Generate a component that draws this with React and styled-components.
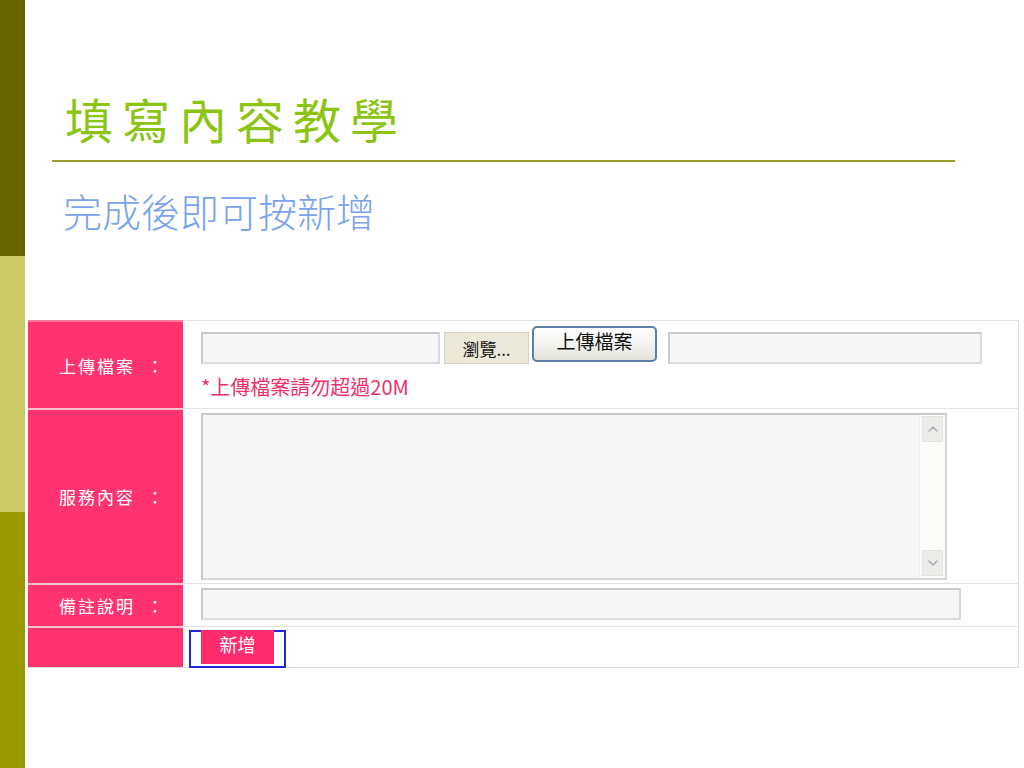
import React from "react";
import styled, { createGlobalStyle } from "styled-components";
import { ChevronUp, ChevronDown } from "lucide-react";

const GlobalStyle = createGlobalStyle`
  html, body {
    margin: 0;
    padding: 0;
    background: #ffffff;
  }
  body {
    font-family: "Noto Sans CJK TC", "Noto Sans CJK SC", "Liberation Sans", sans-serif;
  }
`;

const CJK = `"Noto Sans CJK TC", "Noto Sans CJK SC", "Liberation Sans", sans-serif`;

const Page = styled.div`
  display: flex;
  width: 1024px;
  height: 768px;
  overflow: hidden;
`;

const SideBar = styled.div`
  width: 25px;
  display: flex;
  flex-direction: column;
`;

const SideBlock = styled.div`
  flex: 1;
  background: ${({ color }) => color};
`;

const Main = styled.div`
  flex: 1;
  padding: 0 5px 0 3px;
`;

const Heading = styled.h1`
  margin: 0 0 0 24px;
  width: 890px;
  padding: 90px 0 14px 13px;
  border-bottom: 2px solid #9c9c2c;
  font-family: ${CJK};
  font-weight: 400;
  font-size: 48px;
  line-height: 56px;
  letter-spacing: 9px;
  color: #8cc414;
`;

const SubTitle = styled.p`
  margin: 24px 0 0 35px;
  font-family: ${CJK};
  font-weight: 300;
  font-size: 39px;
  line-height: 48px;
  color: #7aa3ee;
`;

const FormTable = styled.div`
  margin-top: 86px;
  display: flex;
  flex-direction: column;
  border-bottom: 1px solid #dedede;
`;

const Row = styled.div`
  display: flex;
  height: ${({ h }) => h}px;
`;

const Label = styled.div`
  width: 155px;
  flex-shrink: 0;
  box-sizing: border-box;
  background: #ff3370;
  border-top: 2px solid ${({ first }) => (first ? "#ff7aa2" : "#f8c3d3")};
  display: flex;
  align-items: center;
  padding-left: 31px;
  color: #ffffff;
  font-family: ${CJK};
  font-size: 17px;
  letter-spacing: 2px;
  white-space: pre;
`;

const Cell = styled.div`
  flex: 1;
  box-sizing: border-box;
  border-top: 1px solid #e2e2e2;
  border-right: 1px solid #dcdcdc;
  padding: ${({ pad }) => pad};
  display: flex;
  flex-direction: column;
`;

const Line = styled.div`
  display: flex;
  align-items: flex-start;
`;

const TextInput = styled.input`
  box-sizing: border-box;
  width: ${({ w }) => w}px;
  height: 32px;
  margin: ${({ m }) => m || "0"};
  border: 2px solid #c9c9c9;
  border-right-color: #dadada;
  border-bottom-color: #dadada;
  background: #f6f6f6;
  outline: none;
`;

const BrowseButton = styled.button`
  box-sizing: border-box;
  width: 85px;
  height: 32px;
  margin: 6px 3px 0 4px;
  border: 1px solid #d2d0c4;
  background: #ece9d8;
  font-family: ${CJK};
  font-size: 17px;
  color: #111;
  padding: 0;
`;

const UploadButton = styled.button`
  box-sizing: border-box;
  width: 125px;
  height: 36px;
  border: 2px solid #5b7fa6;
  border-radius: 5px;
  background: linear-gradient(#ffffff, #f1f1ec 60%, #e2e2da);
  font-family: ${CJK};
  font-size: 19px;
  line-height: 26px;
  color: #111;
  padding: 0 0 6px;
  display: flex;
  justify-content: center;
  align-items: flex-start;
`;

const Note = styled.div`
  margin-top: 10px;
  font-family: ${CJK};
  font-size: 20px;
  line-height: 26px;
  color: #f0306a;
`;

const AreaBox = styled.div`
  box-sizing: border-box;
  width: 746px;
  height: 167px;
  border: 2px solid #c9c9c9;
  border-right-color: #d6d6d6;
  border-bottom-color: #d6d6d6;
  background: #f6f6f6;
  display: flex;
`;

const Area = styled.textarea`
  flex: 1;
  border: none;
  background: transparent;
  resize: none;
  outline: none;
`;

const ScrollBar = styled.div`
  width: 26px;
  box-sizing: border-box;
  padding: 1px 2px 2px;
  background: #fbfbf8;
  border-left: 1px solid #eeeeee;
  display: flex;
  flex-direction: column;
  justify-content: space-between;
`;

const ScrollArrow = styled.div`
  height: 24px;
  background: #ececea;
  border: 1px solid #e2e2de;
  display: flex;
  align-items: center;
  justify-content: center;
  color: #a9a9a9;
`;

const FocusFrame = styled.div`
  box-sizing: border-box;
  width: 97px;
  height: 38px;
  margin-left: 6px;
  padding: 0 10px 2px 10px;
  border: 2px solid #2323d8;
  display: flex;
`;

const AddButton = styled.button`
  width: 74px;
  height: 34px;
  margin-top: -2px;
  border: none;
  background: #ff2c6e;
  color: #ffffff;
  font-family: ${CJK};
  font-size: 18px;
  padding: 0 0 6px;
`;

export default function App() {
  return (
    <>
      <GlobalStyle />
      <Page>
        <SideBar>
          <SideBlock color="#666600" />
          <SideBlock color="#cccc66" />
          <SideBlock color="#999900" />
        </SideBar>
        <Main>
          <Heading>填寫內容教學</Heading>
          <SubTitle>完成後即可按新增</SubTitle>
          <FormTable>
            <Row h={88}>
              <Label first>上傳檔案  ：</Label>
              <Cell pad="5px 0 0 18px">
                <Line>
                  <TextInput w={239} m="6px 0 0 0" />
                  <BrowseButton>瀏覽...</BrowseButton>
                  <UploadButton>上傳檔案</UploadButton>
                  <TextInput w={314} m="6px 0 0 11px" />
                </Line>
                <Note>*上傳檔案請勿超過20M</Note>
              </Cell>
            </Row>
            <Row h={175}>
              <Label>服務內容  ：</Label>
              <Cell pad="4px 0 0 18px">
                <AreaBox>
                  <Area />
                  <ScrollBar>
                    <ScrollArrow>
                      <ChevronUp size={16} strokeWidth={2.2} />
                    </ScrollArrow>
                    <ScrollArrow>
                      <ChevronDown size={16} strokeWidth={2.2} />
                    </ScrollArrow>
                  </ScrollBar>
                </AreaBox>
              </Cell>
            </Row>
            <Row h={43}>
              <Label>備註說明  ：</Label>
              <Cell pad="4px 0 0 18px">
                <TextInput w={760} />
              </Cell>
            </Row>
            <Row h={41}>
              <Label />
              <Cell pad="3px 0 0 0">
                <FocusFrame>
                  <AddButton>新增</AddButton>
                </FocusFrame>
              </Cell>
            </Row>
          </FormTable>
        </Main>
      </Page>
    </>
  );
}
